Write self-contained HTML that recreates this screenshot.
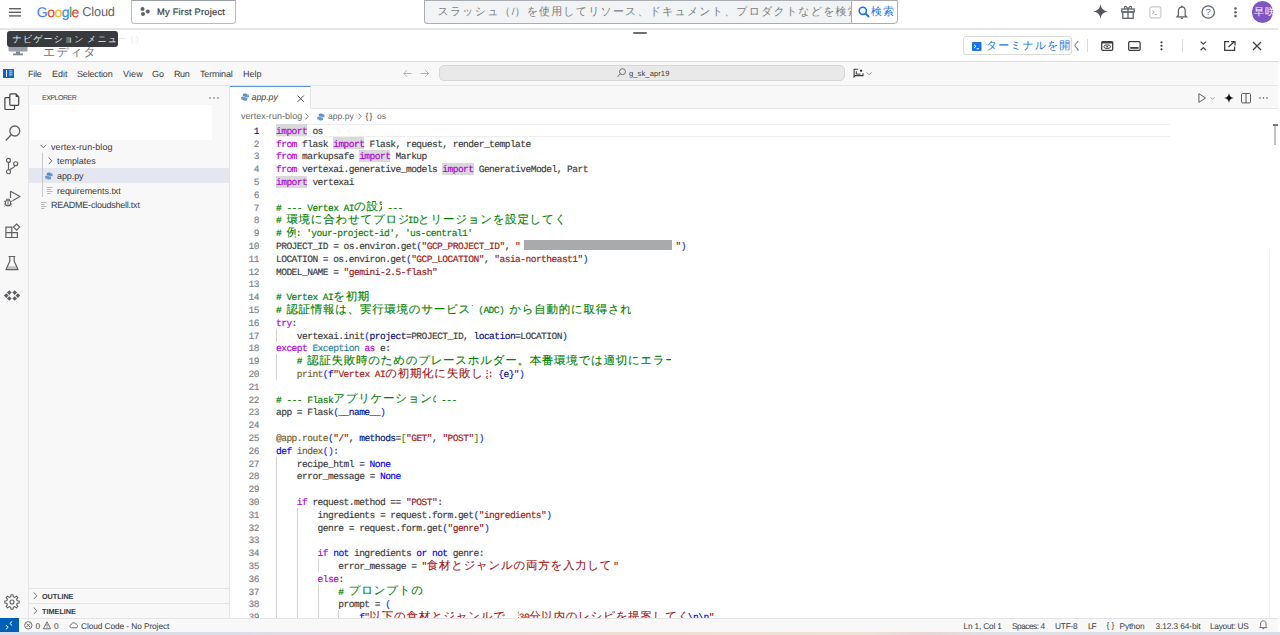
<!DOCTYPE html>
<html><head><meta charset="utf-8">
<style>
*{box-sizing:border-box;margin:0;padding:0}
html,body{width:1280px;height:635px;overflow:hidden;background:#fff;font-family:"Liberation Sans",sans-serif;color:#3b3b3b;text-rendering:geometricPrecision}
.a{position:absolute}
.t{position:absolute;white-space:nowrap;line-height:1}
svg{position:absolute;overflow:visible}
/* top bar */
#sep1{left:0;top:28px;width:1278px;height:2px;background:#e4e6ea}
#projbtn{left:131px;top:0;width:105px;height:24px;border:1px solid #b9bcc1;border-top-color:#9aa0a6;border-radius:0 0 4px 4px;background:#fff}
#search{left:424px;top:0;width:428px;height:24px;background:#f1f3f4;border:1px solid #a9adb2;border-right:none;border-radius:0 0 0 4px}
#searchbtn{left:851px;top:0;width:47px;height:24px;background:#fff;border:1px solid #a9adb2;border-radius:0 0 4px 0}
#avatar{left:1251.5px;top:1.3px;width:21.5px;height:21.5px;border-radius:50%;background:#7e55c4}
/* header */
#hdrline{left:0;top:61px;width:1278px;height:1px;background:#dcdcdc}
#termbtn{left:963px;top:36px;width:109px;height:19px;border:1px solid #dadce0;border-radius:3px;background:#fff}
#tooltip{left:7px;top:31px;width:111px;height:16px;background:#383a3d;border-radius:3px}
/* menubar */
#menubar{left:0;top:62px;width:1278px;height:24px;background:#f8f8f8;border-bottom:1px solid #e5e5e5}
#cmdc{left:439px;top:65px;width:406px;height:16px;background:#e9e9e9;border:1px solid #d6d6d6;border-radius:5px}
/* activity + sidebar */
#act{left:0;top:86px;width:29px;height:532px;background:#f8f8f8;border-right:1px solid #e5e5e5}
#side{left:29px;top:86px;width:201px;height:532px;background:#f8f8f8;border-right:1px solid #e5e5e5}
#filterbox{left:30px;top:105px;width:182px;height:35px;background:#fff}
#selrow{left:29px;top:168px;width:200px;height:15px;background:#e4e6f1}
#outl{left:29px;top:588px;width:200px;height:1px;background:#e5e5e5}
#timel{left:29px;top:603px;width:200px;height:1px;background:#e5e5e5}
.tree{font-size:9px;color:#3b3b3b}
/* editor */
#tabbar{left:230px;top:86px;width:1048px;height:23px;background:#f8f8f8;border-bottom:1px solid #e5e5e5}
#tab{left:230px;top:86px;width:81px;height:23px;background:#fff;border-top:1px solid #5b9bd5;border-right:1px solid #e5e5e5}
#curline{left:276px;top:124px;width:894px;height:13px;border-top:1px solid #eeeeee;border-bottom:1px solid #eeeeee}
#vline{left:1269px;top:249px;width:1px;height:369px;background:#f0f0f0}
#slider{left:1273.5px;top:125px;width:2.5px;height:20px;background:#c2c2c2}
#sliderTop{left:1273px;top:124px;width:4.5px;height:1.5px;background:#7a7a7a}
/* code */
#code{left:276px;top:125.8px;width:1000px;height:493px;overflow:hidden;font-family:"Liberation Mono",monospace;font-size:9.6px;letter-spacing:-0.56px;color:#3b3b3b;-webkit-text-stroke:0.15px}
#code .ln{position:absolute;left:0;white-space:pre;height:12.8px;line-height:12.8px}
#gutter{left:230px;top:125.8px;width:29px;height:493px;overflow:hidden;font-family:"Liberation Mono",monospace;font-size:9.6px;letter-spacing:-0.56px;color:#7a8087;-webkit-text-stroke:0.15px}
#gutter div{position:absolute;right:0;line-height:12.8px;height:12.8px;text-align:right}
#gutter .act{color:#171184}
#guides{left:276px;top:124px;width:200px;height:494px;overflow:hidden}
.ig{position:absolute;width:1px;height:12.8px;background:#d3d3d3}
.j{font-family:"Liberation Sans",sans-serif;font-size:11.5px;letter-spacing:0.71px;-webkit-text-stroke:0.12px;display:inline-block;overflow:hidden;vertical-align:top;height:12.8px;line-height:12.8px;position:relative;top:-1.43px}
.u{font-family:"Liberation Sans",sans-serif}
.k{color:#af00db}.b{color:#0000ff}.c{color:#008000}.s{color:#a31515}.f{color:#795e26}.p{color:#001080}.t2{color:#267f99}

.b1{color:#0431fa}.b2{color:#319331}.b3{color:#7b3814}

.hl{background:#d8d8d8}
#hls{left:276px;top:124px;width:300px;height:80px}
.hlb{position:absolute;width:31.2px;height:12.2px;background:#d9d9d9}
.red{display:inline-block;width:148.6px;height:9.9px;background:#a9aaac;vertical-align:top;position:relative;top:-0.8px;margin-left:-1.8px;margin-right:3.2px}
/* status */
#status{left:0;top:618px;width:1278px;height:14px;background:#f8f8f8;border-top:1px solid #e5e5e5}
#remote{left:0;top:618px;width:19px;height:14px;background:#005fb8}
#strip{left:0;top:632px;width:1280px;height:3px;background:linear-gradient(90deg,#d6dde8 0%,#dcdde8 18%,#e6dae2 26%,#ecdcd6 36%,#efe0d4 55%,#ede3d6 68%,#e9d6d6 72%,#dfe1e6 78%,#d7dee7 100%)}
.st{font-size:8.3px;color:#3b3b3b}
.menu{font-size:9px;color:#3b3b3b}
</style></head><body>

<!-- ===== TOP BAR ===== -->
<div class="a" id="sep1"></div>
<svg style="left:9px;top:8px" width="12" height="9"><rect x="0" y="0" width="12" height="1.4" fill="#5f6368"/><rect x="0" y="3.6" width="12" height="1.4" fill="#5f6368"/><rect x="0" y="7.2" width="12" height="1.4" fill="#5f6368"/></svg>
<div class="t" style="left:36.8px;top:4.9px;font-size:14px;letter-spacing:-0.55px;-webkit-text-stroke:0.15px"><span style="color:#4285f4">G</span><span style="color:#ea4335">o</span><span style="color:#fbbc04">o</span><span style="color:#4285f4">g</span><span style="color:#34a853">l</span><span style="color:#ea4335">e</span></div>
<div class="t" style="left:82.3px;top:6.3px;font-size:12.8px;letter-spacing:-0.2px;color:#5f6368">Cloud</div>
<div class="a" id="projbtn"></div>
<svg style="left:139px;top:6px" width="12" height="12"><circle cx="3.5" cy="2.9" r="2" fill="#5f6368"/><circle cx="8.8" cy="5.6" r="2" fill="#5f6368"/><circle cx="4" cy="8.1" r="2" fill="#5f6368"/></svg>
<div class="t" style="left:157px;top:7.7px;font-size:9.3px;color:#3c4043;-webkit-text-stroke:0.2px;letter-spacing:0.221px">My First Project</div>
<div class="a" id="search"></div>
<div class="t" style="left:437.5px;top:7px;font-size:11px;letter-spacing:1.15px;color:#7a7e83">スラッシュ（<span style="font-size:10px;letter-spacing:0">/</span>）を使用してリソース、ドキュメント、プロダクトなどを検索</div>
<div class="a" id="searchbtn"></div>
<svg style="left:858px;top:6px" width="12" height="12"><circle cx="4.8" cy="4.8" r="3.6" fill="none" stroke="#1a73e8" stroke-width="1.6"/><line x1="7.5" y1="7.5" x2="11" y2="11" stroke="#1a73e8" stroke-width="1.8"/></svg>
<div class="t" style="left:871px;top:7px;font-size:11px;letter-spacing:0.95px;color:#1a73e8">検索</div>
<!-- right icons -->
<svg style="left:1093.2px;top:4.4px" width="15" height="15"><path d="M7.5 0 Q8.1 6.9 15 7.5 Q8.1 8.1 7.5 15 Q6.9 8.1 0 7.5 Q6.9 6.9 7.5 0Z" fill="#55595e"/></svg>
<svg style="left:1121px;top:5px" width="14" height="14"><rect x="0.8" y="4" width="12.4" height="3" fill="none" stroke="#5f6368" stroke-width="1.3"/><rect x="1.8" y="7" width="10.4" height="6.3" fill="none" stroke="#5f6368" stroke-width="1.3"/><line x1="7" y1="4" x2="7" y2="13.3" stroke="#5f6368" stroke-width="1.3"/><path d="M7 4 C5 0 2.5 1 4 4 M7 4 C9 0 11.5 1 10 4" fill="none" stroke="#5f6368" stroke-width="1.2"/></svg>
<svg style="left:1148.5px;top:5.5px" width="13" height="13"><rect x="0.9" y="0.9" width="11" height="11" rx="1.6" fill="none" stroke="#c4c7cb" stroke-width="1.1"/><path d="M3.2 4.6 L5.2 6.2 L3.2 7.8 M5.8 8.6 H8.2" fill="none" stroke="#a8acb0" stroke-width="0.9"/></svg>
<svg style="left:1175.5px;top:5px" width="12" height="15"><path d="M5.8 2 C3.6 2 2.4 3.8 2.4 6 V10.2 L1 11.8 H10.6 L9.2 10.2 V6 C9.2 3.8 8 2 5.8 2Z" fill="none" stroke="#5f6368" stroke-width="1.25"/><circle cx="5.8" cy="1.4" r="0.9" fill="#5f6368"/><rect x="4.6" y="12.6" width="2.4" height="1.4" rx="0.7" fill="#5f6368"/></svg>
<svg style="left:1201px;top:5px" width="15" height="15"><circle cx="7.2" cy="7" r="6.2" fill="none" stroke="#5f6368" stroke-width="1.3"/><text x="7.2" y="10.2" font-size="9" font-family="Liberation Sans" text-anchor="middle" fill="#5f6368">?</text></svg>
<svg style="left:1234px;top:7px" width="3" height="11"><circle cx="1.5" cy="1.5" r="1.3" fill="#5f6368"/><circle cx="1.5" cy="5.3" r="1.3" fill="#5f6368"/><circle cx="1.5" cy="9.1" r="1.3" fill="#5f6368"/></svg>
<div class="a" id="avatar"></div>
<div class="t" style="left:1254px;top:8px;font-size:10px;letter-spacing:1.0px;color:#fff">早咲</div>

<!-- ===== EDITOR HEADER ===== -->
<div class="a" style="left:633px;top:31.7px;width:14px;height:2px;border-radius:1px;background:#717175"></div>
<svg style="left:8px;top:40px" width="20" height="16"><rect x="0.5" y="0.5" width="19" height="11" rx="1" fill="#9aa0a6"/><rect x="8" y="11.5" width="4" height="2.5" fill="#80868b"/><rect x="5" y="13.5" width="10" height="1.8" fill="#80868b"/></svg>
<div class="t" style="left:43px;top:46px;font-size:12px;letter-spacing:1.25px;color:#6a6e73">エディタ</div>
<div class="a" id="tooltip"></div>
<div class="t" style="left:12.6px;top:34.5px;font-size:9px;letter-spacing:1.1px;color:#e8eaed">ナビゲーション<span style="letter-spacing:0"> </span>メニュー<span style="font-size:8.6px;letter-spacing:0"> (.)</span></div>
<div class="a" id="termbtn"></div>
<svg style="left:972px;top:42px" width="10" height="9"><rect x="0" y="0" width="9.5" height="9" rx="1" fill="#1a73e8"/><path d="M2 2.8 L4 4.4 L2 6 M4.6 6.8 H7" fill="none" stroke="#fff" stroke-width="1"/></svg>
<div class="t" style="left:986px;top:41px;font-size:11px;letter-spacing:1.0px;color:#1a73e8">ターミナルを開く</div>
<div class="a" style="left:1087px;top:39px;width:1px;height:13px;background:#dadce0"></div>
<svg style="left:1101px;top:41px" width="13" height="10"><rect x="0.7" y="0.7" width="11" height="8.6" rx="1" fill="none" stroke="#3c4043" stroke-width="1.3"/><rect x="0.7" y="0.7" width="11" height="1.8" fill="#3c4043"/><ellipse cx="6.2" cy="5.7" rx="3.4" ry="1.8" fill="none" stroke="#3c4043" stroke-width="1"/><circle cx="6.2" cy="5.7" r="0.9" fill="#3c4043"/></svg>
<svg style="left:1128px;top:41px" width="13" height="10"><rect x="0.7" y="0.7" width="11.4" height="8.6" rx="1" fill="none" stroke="#3c4043" stroke-width="1.3"/><rect x="2.2" y="6" width="8.4" height="1.8" fill="#3c4043"/></svg>
<svg style="left:1160px;top:41px" width="3" height="10"><circle cx="1.5" cy="1.3" r="1.1" fill="#3c4043"/><circle cx="1.5" cy="4.8" r="1.1" fill="#3c4043"/><circle cx="1.5" cy="8.3" r="1.1" fill="#3c4043"/></svg>
<div class="a" style="left:1182px;top:39px;width:1px;height:13px;background:#dadce0"></div>
<svg style="left:1200px;top:41px" width="7" height="10"><path d="M0.6 0.6 L3.3 3.2 L6 0.6 M0.6 9.2 L3.3 6.6 L6 9.2" fill="none" stroke="#3c4043" stroke-width="1.2"/></svg>
<svg style="left:1224px;top:41px" width="12" height="10"><path d="M5 0.7 H0.7 V9.3 H10.6 V5.5" fill="none" stroke="#3c4043" stroke-width="1.3"/><path d="M4.5 6 L10.8 0.3 M7 0.7 H11 V4.6" fill="none" stroke="#3c4043" stroke-width="1.3"/></svg>
<svg style="left:1252px;top:41px" width="10" height="10"><path d="M1 1 L9 9 M9 1 L1 9" stroke="#3c4043" stroke-width="1.3"/></svg>
<div class="a" id="hdrline"></div>

<!-- ===== MENUBAR ===== -->
<div class="a" id="menubar"></div>
<svg style="left:3px;top:69px" width="11" height="9"><rect x="0" y="0" width="11" height="9" fill="#0a66c9"/><rect x="3" y="1" width="1" height="7" fill="#fff"/><rect x="6" y="1.5" width="3.5" height="0.8" fill="#fff"/><rect x="6" y="3.5" width="3.5" height="0.8" fill="#fff"/><rect x="6" y="5.5" width="3.5" height="0.8" fill="#fff"/></svg>
<div class="t menu" style="left:28px;top:69.5px;letter-spacing:-0.239px">File</div>
<div class="t menu" style="left:52px;top:69.5px;letter-spacing:-0.039px">Edit</div>
<div class="t menu" style="left:77px;top:69.5px;letter-spacing:-0.166px">Selection</div>
<div class="t menu" style="left:123px;top:69.5px;letter-spacing:0.114px">View</div>
<div class="t menu" style="left:152px;top:69.5px;letter-spacing:0.084px">Go</div>
<div class="t menu" style="left:174px;top:69.5px;letter-spacing:-0.408px">Run</div>
<div class="t menu" style="left:200px;top:69.5px;letter-spacing:-0.188px">Terminal</div>
<div class="t menu" style="left:243px;top:69.5px;letter-spacing:-0.039px">Help</div>
<svg style="left:403px;top:69px" width="27" height="9"><path d="M8.5 4.5 H0.8 M4 1.2 L0.8 4.5 L4 7.8" fill="none" stroke="#b3b3b3" stroke-width="1"/><path d="M17.5 4.5 H25.5 M22.2 1.2 L25.5 4.5 L22.2 7.8" fill="none" stroke="#b3b3b3" stroke-width="1"/></svg>
<div class="a" id="cmdc"></div>
<svg style="left:617px;top:68px" width="9" height="10"><circle cx="5.5" cy="3.7" r="3" fill="none" stroke="#616161" stroke-width="0.9"/><line x1="3.4" y1="5.8" x2="0.6" y2="8.8" stroke="#616161" stroke-width="1"/></svg>
<div class="t" style="left:629px;top:69.5px;font-size:7.6px;color:#3b3b3b;letter-spacing:0.079px">g_sk_apr19</div>
<svg style="left:853px;top:68px" width="20" height="10"><path d="M5 1.3 H1.1 V8.9 L2.4 7.6 H10 V5.2" fill="none" stroke="#3b3b3b" stroke-width="1.1"/><path d="M3.3 3.2 V6.1 H7.5" fill="none" stroke="#3b3b3b" stroke-width="1"/><circle cx="8.1" cy="2.8" r="1.15" fill="#222"/><path d="M13.6 4.3 L16.1 6.8 L18.6 4.3" fill="none" stroke="#8a8a8a" stroke-width="0.9"/></svg>

<!-- ===== ACTIVITY BAR ===== -->
<div class="a" id="act"></div>
<svg style="left:4px;top:92px" width="17" height="19"><path d="M6.8 1.9 H11.9 L14.7 4.7 V12.3 Q14.7 13.3 13.7 13.3 H6.8 Q5.8 13.3 5.8 12.3 V2.9 Q5.8 1.9 6.8 1.9Z" fill="none" stroke="#424242" stroke-width="1.2"/><path d="M11.6 1.9 L14.7 5 L11.6 5Z" fill="#424242"/><path d="M5.8 5.7 H1.9 Q0.9 5.7 0.9 6.7 V16.5 Q0.9 17.5 1.9 17.5 H9.5 Q10.5 17.5 10.5 16.5 V13.3" fill="none" stroke="#424242" stroke-width="1.2"/></svg>
<svg style="left:5px;top:125px" width="16" height="17"><circle cx="9.8" cy="6" r="5" fill="none" stroke="#616161" stroke-width="1.3"/><line x1="6.2" y1="9.8" x2="0.8" y2="15.6" stroke="#616161" stroke-width="1.4"/></svg>
<svg style="left:5px;top:157px" width="16" height="18"><circle cx="3.5" cy="3.4" r="2" fill="none" stroke="#616161" stroke-width="1.15"/><circle cx="3.5" cy="14.7" r="2" fill="none" stroke="#616161" stroke-width="1.15"/><circle cx="10.7" cy="6.7" r="2" fill="none" stroke="#616161" stroke-width="1.15"/><path d="M3.5 5.4 V12.7 M10.2 8.6 C9.5 10.6 7 10.8 4.6 13" fill="none" stroke="#616161" stroke-width="1.15"/></svg>
<svg style="left:3px;top:189px" width="18" height="18"><path d="M7.5 2.2 L17 7.6 L9.5 11.8" fill="none" stroke="#616161" stroke-width="1.2" stroke-linejoin="round"/><path d="M7.5 2.2 V9" fill="none" stroke="#616161" stroke-width="1.2"/><ellipse cx="5" cy="14" rx="2.6" ry="3" fill="#f8f8f8" stroke="#616161" stroke-width="1.1"/><path d="M3 10.5 Q5 9.5 7 10.5 M0.8 12.3 H2.4 M7.6 12.3 H9.2 M0.8 15 H2.4 M7.6 15 H9.2 M1.4 17.4 L2.6 16.4 M8.6 17.4 L7.4 16.4 M5 11.5 V17" fill="none" stroke="#616161" stroke-width="0.9"/></svg>
<svg style="left:5px;top:223px" width="16" height="16"><path d="M0.9 4.2 H6.8 V9.6 H0.9Z M0.9 9.6 H6.8 V14.5 H0.9Z M6.8 9.6 H12.4 V14.5 H6.8Z" fill="none" stroke="#616161" stroke-width="1.2"/><path d="M11.6 1 L14.7 4.1 L11.6 7.2 L8.5 4.1Z" fill="none" stroke="#616161" stroke-width="1.2"/></svg>
<svg style="left:5px;top:255px" width="14" height="16"><path d="M3.6 1.5 H10.2 M4.8 1.5 V6.2 L1 14.6 H13 L9.2 6.2 V1.5" fill="none" stroke="#616161" stroke-width="1.2" stroke-linejoin="round"/><path d="M2.6 11.2 L11.4 11.2 L12.6 14 H1.4Z" fill="#616161" opacity="0.35"/></svg>
<svg style="left:0px;top:285px" width="26" height="20"><path d="M6.30 8.25 L8.65 10.60 L6.30 12.95 L3.95 10.60Z M9.30 5.25 L11.65 7.60 L9.30 9.95 L6.95 7.60Z M9.30 11.15 L11.65 13.50 L9.30 15.85 L6.95 13.50Z M14.70 5.25 L17.05 7.60 L14.70 9.95 L12.35 7.60Z M17.90 8.25 L20.25 10.60 L17.90 12.95 L15.55 10.60Z M14.70 11.15 L17.05 13.50 L14.70 15.85 L12.35 13.50Z" fill="#5f6166"/></svg>
<svg style="left:4px;top:594px" width="17" height="17"><path d="M15.23 6.97 L15.23 9.03 L13.25 9.26 L12.60 10.82 L13.84 12.38 L12.38 13.84 L10.82 12.60 L9.26 13.25 L9.03 15.23 L6.97 15.23 L6.74 13.25 L5.18 12.60 L3.62 13.84 L2.16 12.38 L3.40 10.82 L2.75 9.26 L0.77 9.03 L0.77 6.97 L2.75 6.74 L3.40 5.18 L2.16 3.62 L3.62 2.16 L5.18 3.40 L6.74 2.75 L6.97 0.77 L9.03 0.77 L9.26 2.75 L10.82 3.40 L12.38 2.16 L13.84 3.62 L12.60 5.18 L13.25 6.74Z" fill="none" stroke="#616161" stroke-width="1.1" stroke-linejoin="round"/><circle cx="8" cy="8" r="2" fill="none" stroke="#616161" stroke-width="1.1"/></svg>

<!-- ===== SIDEBAR ===== -->
<div class="a" id="side"></div>
<div class="t" style="left:42px;top:94.5px;font-size:7px;color:#4a4a4a;letter-spacing:-0.489px">EXPLORER</div>
<svg style="left:209px;top:97px" width="10" height="2"><circle cx="1" cy="1" r="0.8" fill="#616161"/><circle cx="5" cy="1" r="0.8" fill="#616161"/><circle cx="9" cy="1" r="0.8" fill="#616161"/></svg>
<div class="a" id="filterbox"></div>
<div class="a" id="selrow"></div>
<svg style="left:40px;top:144px" width="7" height="5"><path d="M0.5 0.8 L3.3 3.8 L6.1 0.8" fill="none" stroke="#616161" stroke-width="0.9"/></svg>
<div class="t tree" style="left:51px;top:142.5px;letter-spacing:0.069px">vertex-run-blog</div>
<div class="a" style="left:42px;top:153px;width:1px;height:44px;background:#c8c8c8"></div>
<svg style="left:48px;top:157px" width="5" height="8"><path d="M0.8 0.5 L3.8 3.8 L0.8 7.1" fill="none" stroke="#616161" stroke-width="0.9"/></svg>
<div class="t tree" style="left:57px;top:157px;letter-spacing:-0.041px">templates</div>
<svg style="left:44.5px;top:171.5px" width="9" height="9"><g transform="scale(0.88)" opacity="0.85"><path d="M4.3 0.5 C2 0.5 2 1.5 2 2.5 V3.6 H4.6 V4.2 H1.2 C0 4.2 0 5.8 0.5 6.8 C0.8 7.6 1.5 7.6 2 7.6 V6 C2 5 3 4.6 3.6 4.6 H5.6 C6.4 4.6 6.8 4 6.8 3.4 V1.6 C6.8 0.8 5.6 0.5 4.3 0.5Z" fill="#3f7fbf"/><path d="M4.6 8.5 C6.9 8.5 6.9 7.5 6.9 6.5 V5.4 H4.3 V4.8 H7.7 C8.9 4.8 8.9 3.2 8.4 2.2 C8.1 1.4 7.4 1.4 6.9 1.4 V3 C6.9 4 5.9 4.4 5.3 4.4 H3.3 C2.5 4.4 2.1 5 2.1 5.6 V7.4 C2.1 8.2 3.3 8.5 4.6 8.5Z" fill="#4b8bc6"/></g></svg>
<div class="t tree" style="left:57px;top:171.5px;letter-spacing:-0.086px">app.py</div>
<svg style="left:47px;top:187px" width="6" height="7"><path d="M0 0.5 H5.5 M0 2.5 H4 M0 4.5 H5.5 M0 6.5 H3.5" stroke="#b5b5b5" stroke-width="0.95"/></svg>
<div class="t tree" style="left:57px;top:186.5px;letter-spacing:-0.049px">requirements.txt</div>
<svg style="left:41px;top:202px" width="6" height="7"><path d="M0 0.5 H5.5 M0 2.5 H4 M0 4.5 H5.5 M0 6.5 H3.5" stroke="#b5b5b5" stroke-width="0.95"/></svg>
<div class="t tree" style="left:51px;top:201px;letter-spacing:-0.232px">README-cloudshell.txt</div>
<div class="a" id="outl"></div>
<div class="a" id="timel"></div>
<svg style="left:33px;top:592px" width="5" height="8"><path d="M0.8 0.5 L3.8 3.8 L0.8 7.1" fill="none" stroke="#616161" stroke-width="0.9"/></svg>
<div class="t" style="left:42px;top:593px;font-size:7.3px;font-weight:bold;color:#3b3b3b;letter-spacing:-0.089px">OUTLINE</div>
<svg style="left:33px;top:607px" width="5" height="8"><path d="M0.8 0.5 L3.8 3.8 L0.8 7.1" fill="none" stroke="#616161" stroke-width="0.9"/></svg>
<div class="t" style="left:42px;top:608px;font-size:7.3px;font-weight:bold;color:#3b3b3b;letter-spacing:-0.009px">TIMELINE</div>

<!-- ===== EDITOR ===== -->
<div class="a" id="tabbar"></div>
<div class="a" id="tab"></div>
<svg style="left:240.5px;top:93px" width="10" height="10"><g transform="scale(0.82)" opacity="0.85"><path d="M4.8 0.5 C2.2 0.5 2.2 1.6 2.2 2.8 V4 H5.1 V4.6 H1.3 C0 4.6 0 6.4 0.5 7.5 C0.9 8.4 1.6 8.4 2.2 8.4 V6.6 C2.2 5.5 3.3 5.1 4 5.1 H6.2 C7.1 5.1 7.5 4.4 7.5 3.8 V1.8 C7.5 0.9 6.2 0.5 4.8 0.5Z" fill="#3f7fbf"/><path d="M5.1 9.5 C7.7 9.5 7.7 8.4 7.7 7.2 V6 H4.8 V5.4 H8.6 C9.9 5.4 9.9 3.6 9.4 2.5 C9 1.6 8.3 1.6 7.7 1.6 V3.4 C7.7 4.5 6.6 4.9 5.9 4.9 H3.7 C2.8 4.9 2.4 5.6 2.4 6.2 V8.2 C2.4 9.1 3.7 9.5 5.1 9.5Z" fill="#4b8bc6"/></g></svg>
<div class="t" style="left:251.5px;top:93px;font-size:8.8px;font-style:italic;color:#3b3b3b">app.py</div>
<svg style="left:297px;top:94.5px" width="8" height="8"><path d="M0.6 0.6 L6.8 6.8 M6.8 0.6 L0.6 6.8" stroke="#424242" stroke-width="0.95"/></svg>
<!-- editor actions -->
<svg style="left:1197.5px;top:92.5px" width="20" height="11"><path d="M0.9 0.7 L7.6 5 L0.9 9.3Z" fill="none" stroke="#555" stroke-width="0.95" stroke-linejoin="round"/><path d="M12.5 4.3 L14.5 6.3 L16.5 4.3" fill="none" stroke="#8a8a8a" stroke-width="0.8"/></svg>
<svg style="left:1223.5px;top:93px" width="10" height="10"><path d="M5 0 C5.5 3.2 6.6 4.4 10 5 C6.6 5.6 5.5 6.8 5 10 C4.5 6.8 3.4 5.6 0 5 C3.4 4.4 4.5 3.2 5 0Z" fill="#111"/></svg>
<svg style="left:1241px;top:92.5px" width="10" height="11"><rect x="0.5" y="0.5" width="9" height="9.4" rx="1" fill="none" stroke="#555" stroke-width="0.95"/><line x1="5" y1="0.5" x2="5" y2="9.9" stroke="#555" stroke-width="0.95"/></svg>
<svg style="left:1259px;top:97px" width="9" height="2"><circle cx="1" cy="1" r="0.75" fill="#424242"/><circle cx="4.5" cy="1" r="0.75" fill="#424242"/><circle cx="8" cy="1" r="0.75" fill="#424242"/></svg>
<!-- breadcrumbs -->
<div class="t" style="left:241px;top:112px;font-size:9px;letter-spacing:0.05px;color:#6a6a6a">vertex-run-blog</div>
<svg style="left:305px;top:113px" width="4" height="7"><path d="M0.5 0.5 L3.2 3.4 L0.5 6.3" fill="none" stroke="#616161" stroke-width="0.8"/></svg>
<svg style="left:316.5px;top:112.5px" width="9" height="9"><g transform="scale(0.88)" opacity="0.85"><path d="M4.3 0.5 C2 0.5 2 1.5 2 2.5 V3.6 H4.6 V4.2 H1.2 C0 4.2 0 5.8 0.5 6.8 C0.8 7.6 1.5 7.6 2 7.6 V6 C2 5 3 4.6 3.6 4.6 H5.6 C6.4 4.6 6.8 4 6.8 3.4 V1.6 C6.8 0.8 5.6 0.5 4.3 0.5Z" fill="#3f7fbf"/><path d="M4.6 8.5 C6.9 8.5 6.9 7.5 6.9 6.5 V5.4 H4.3 V4.8 H7.7 C8.9 4.8 8.9 3.2 8.4 2.2 C8.1 1.4 7.4 1.4 6.9 1.4 V3 C6.9 4 5.9 4.4 5.3 4.4 H3.3 C2.5 4.4 2.1 5 2.1 5.6 V7.4 C2.1 8.2 3.3 8.5 4.6 8.5Z" fill="#4b8bc6"/></g></svg>
<div class="t" style="left:328px;top:112px;font-size:8.6px;color:#6a6a6a">app.py</div>
<svg style="left:358px;top:113px" width="4" height="7"><path d="M0.5 0.5 L3.2 3.4 L0.5 6.3" fill="none" stroke="#616161" stroke-width="0.8"/></svg>
<div class="t" style="left:365.5px;top:111.5px;font-size:8.6px;letter-spacing:1.2px;color:#424242">{}</div>
<div class="t" style="left:377px;top:112px;font-size:8.6px;color:#6a6a6a">os</div>

<div class="a" id="curline"></div>
<div class="a" id="guides"><div class="ig" style="left:0.0px;top:204.80px"></div>
<div class="ig" style="left:0.0px;top:230.40px"></div>
<div class="ig" style="left:0.0px;top:243.20px"></div>
<div class="ig" style="left:0.0px;top:332.80px"></div>
<div class="ig" style="left:0.0px;top:345.60px"></div>
<div class="ig" style="left:0.0px;top:358.40px"></div>
<div class="ig" style="left:0.0px;top:371.20px"></div>
<div class="ig" style="left:0.0px;top:384.00px"></div>
<div class="ig" style="left:20.8px;top:384.00px"></div>
<div class="ig" style="left:0.0px;top:396.80px"></div>
<div class="ig" style="left:20.8px;top:396.80px"></div>
<div class="ig" style="left:0.0px;top:409.60px"></div>
<div class="ig" style="left:20.8px;top:409.60px"></div>
<div class="ig" style="left:0.0px;top:422.40px"></div>
<div class="ig" style="left:20.8px;top:422.40px"></div>
<div class="ig" style="left:0.0px;top:435.20px"></div>
<div class="ig" style="left:20.8px;top:435.20px"></div>
<div class="ig" style="left:41.6px;top:435.20px"></div>
<div class="ig" style="left:0.0px;top:448.00px"></div>
<div class="ig" style="left:20.8px;top:448.00px"></div>
<div class="ig" style="left:0.0px;top:460.80px"></div>
<div class="ig" style="left:20.8px;top:460.80px"></div>
<div class="ig" style="left:41.6px;top:460.80px"></div>
<div class="ig" style="left:0.0px;top:473.60px"></div>
<div class="ig" style="left:20.8px;top:473.60px"></div>
<div class="ig" style="left:41.6px;top:473.60px"></div>
<div class="ig" style="left:0.0px;top:486.40px"></div>
<div class="ig" style="left:20.8px;top:486.40px"></div>
<div class="ig" style="left:41.6px;top:486.40px"></div>
<div class="ig" style="left:62.4px;top:486.40px"></div></div>
<div class="a" id="hls"><div class="hlb" style="left:0.0px;top:0.30px"></div>
<div class="hlb" style="left:57.2px;top:13.10px"></div>
<div class="hlb" style="left:83.2px;top:25.90px"></div>
<div class="hlb" style="left:166.4px;top:38.70px"></div>
<div class="hlb" style="left:0.0px;top:51.50px"></div></div>
<div class="a" id="gutter"><div class="gn act" style="top:0.00px">1</div>
<div class="gn" style="top:12.80px">2</div>
<div class="gn" style="top:25.60px">3</div>
<div class="gn" style="top:38.40px">4</div>
<div class="gn" style="top:51.20px">5</div>
<div class="gn" style="top:64.00px">6</div>
<div class="gn" style="top:76.80px">7</div>
<div class="gn" style="top:89.60px">8</div>
<div class="gn" style="top:102.40px">9</div>
<div class="gn" style="top:115.20px">10</div>
<div class="gn" style="top:128.00px">11</div>
<div class="gn" style="top:140.80px">12</div>
<div class="gn" style="top:153.60px">13</div>
<div class="gn" style="top:166.40px">14</div>
<div class="gn" style="top:179.20px">15</div>
<div class="gn" style="top:192.00px">16</div>
<div class="gn" style="top:204.80px">17</div>
<div class="gn" style="top:217.60px">18</div>
<div class="gn" style="top:230.40px">19</div>
<div class="gn" style="top:243.20px">20</div>
<div class="gn" style="top:256.00px">21</div>
<div class="gn" style="top:268.80px">22</div>
<div class="gn" style="top:281.60px">23</div>
<div class="gn" style="top:294.40px">24</div>
<div class="gn" style="top:307.20px">25</div>
<div class="gn" style="top:320.00px">26</div>
<div class="gn" style="top:332.80px">27</div>
<div class="gn" style="top:345.60px">28</div>
<div class="gn" style="top:358.40px">29</div>
<div class="gn" style="top:371.20px">30</div>
<div class="gn" style="top:384.00px">31</div>
<div class="gn" style="top:396.80px">32</div>
<div class="gn" style="top:409.60px">33</div>
<div class="gn" style="top:422.40px">34</div>
<div class="gn" style="top:435.20px">35</div>
<div class="gn" style="top:448.00px">36</div>
<div class="gn" style="top:460.80px">37</div>
<div class="gn" style="top:473.60px">38</div>
<div class="gn" style="top:486.40px">39</div></div>
<div class="a" id="code"><div class="ln" style="top:0.00px"><span class="k">import</span> os</div>
<div class="ln" style="top:12.80px"><span class="k">from</span> flask <span class="k">import</span> Flask, request, render_template</div>
<div class="ln" style="top:25.60px"><span class="k">from</span> markupsafe <span class="k">import</span> Markup</div>
<div class="ln" style="top:38.40px"><span class="k">from</span> vertexai.generative_models <span class="k">import</span> GenerativeModel, Part</div>
<div class="ln" style="top:51.20px"><span class="k">import</span> vertexai</div>
<div class="ln" style="top:64.00px"></div>
<div class="ln" style="top:76.80px"><span class="c"># --- Vertex AI<span class="j" style="width:27.99px">の設定</span> ---</span></div>
<div class="ln" style="top:89.60px"><span class="c"># <span class="j" style="width:121.29px">環境に合わせてプロジェクト</span>ID<span class="j" style="width:149.28px">とリージョンを設定してください。</span></span></div>
<div class="ln" style="top:102.40px"><span class="c"># <span class="j" style="width:9.33px">例</span>: &#x27;your-project-id&#x27;, &#x27;us-central1&#x27;</span></div>
<div class="ln" style="top:115.20px">PROJECT_ID = os.environ.get<span class="b1">(</span><span class="s">&quot;GCP_PROJECT_ID&quot;</span>, <span class="s">&quot; </span><span class="red"></span><span class="s">&quot;</span><span class="b1">)</span></div>
<div class="ln" style="top:128.00px">LOCATION = os.environ.get<span class="b1">(</span><span class="s">&quot;GCP_LOCATION&quot;</span>, <span class="s">&quot;asia-northeast1&quot;</span><span class="b1">)</span></div>
<div class="ln" style="top:140.80px">MODEL_NAME = <span class="s">&quot;gemini-2.5-flash&quot;</span></div>
<div class="ln" style="top:153.60px"></div>
<div class="ln" style="top:166.40px"><span class="c"># Vertex AI<span class="j" style="width:37.32px">を初期化</span></span></div>
<div class="ln" style="top:179.20px"><span class="c"># <span class="j" style="width:186.60px">認証情報は、実行環境のサービスアカウント</span> (ADC) <span class="j" style="width:121.29px">から自動的に取得されます。</span></span></div>
<div class="ln" style="top:192.00px"><span class="k">try</span>:</div>
<div class="ln" style="top:204.80px">    vertexai.init<span class="b1">(</span><span class="p">project</span>=PROJECT_ID, <span class="p">location</span>=LOCATION<span class="b1">)</span></div>
<div class="ln" style="top:217.60px"><span class="k">except</span> <span class="t2">Exception</span> <span class="k">as</span> e:</div>
<div class="ln" style="top:230.40px"><span class="c">    # <span class="j" style="width:363.87px">認証失敗時のためのプレースホルダー。本番環境では適切にエラー処理してください。</span></span></div>
<div class="ln" style="top:243.20px">    <span class="f">print</span><span class="b1">(</span><span class="b">f</span><span class="s">&quot;Vertex AI<span class="j" style="width:102.63px">の初期化に失敗しました</span>: </span><span class="b">{</span><span class="p">e</span><span class="b">}</span><span class="s">&quot;</span><span class="b1">)</span></div>
<div class="ln" style="top:256.00px"></div>
<div class="ln" style="top:268.80px"><span class="c"># --- Flask<span class="j" style="width:102.63px">アプリケーションの設定</span> ---</span></div>
<div class="ln" style="top:281.60px">app = Flask<span class="b1">(</span><span class="p">__name__</span><span class="b1">)</span></div>
<div class="ln" style="top:294.40px"></div>
<div class="ln" style="top:307.20px"><span class="f">@app.route</span><span class="b1">(</span><span class="s">&quot;/&quot;</span>, <span class="p">methods</span>=<span class="b2">[</span><span class="s">&quot;GET&quot;</span>, <span class="s">&quot;POST&quot;</span><span class="b2">]</span><span class="b1">)</span></div>
<div class="ln" style="top:320.00px"><span class="b">def</span> <span class="f">index</span><span class="b1">()</span>:</div>
<div class="ln" style="top:332.80px">    recipe_html = <span class="b">None</span></div>
<div class="ln" style="top:345.60px">    error_message = <span class="b">None</span></div>
<div class="ln" style="top:358.40px"></div>
<div class="ln" style="top:371.20px">    <span class="k">if</span> request.method == <span class="s">&quot;POST&quot;</span>:</div>
<div class="ln" style="top:384.00px">        ingredients = request.form.get<span class="b1">(</span><span class="s">&quot;ingredients&quot;</span><span class="b1">)</span></div>
<div class="ln" style="top:396.80px">        genre = request.form.get<span class="b1">(</span><span class="s">&quot;genre&quot;</span><span class="b1">)</span></div>
<div class="ln" style="top:409.60px"></div>
<div class="ln" style="top:422.40px">        <span class="k">if</span> <span class="b">not</span> ingredients <span class="b">or</span> <span class="b">not</span> genre:</div>
<div class="ln" style="top:435.20px">            error_message = <span class="s">&quot;<span class="j" style="width:186.60px">食材とジャンルの両方を入力してください。</span>&quot;</span></div>
<div class="ln" style="top:448.00px">        <span class="k">else</span>:</div>
<div class="ln" style="top:460.80px"><span class="c">            # <span class="j" style="width:74.64px">プロンプトの作成</span></span></div>
<div class="ln" style="top:473.60px">            prompt = <span class="b1">(</span></div>
<div class="ln" style="top:486.40px">                <span class="b">f</span><span class="s">&quot;<span class="j" style="width:149.28px">以下の食材とジャンルで、調理時間</span>30<span class="j" style="width:158.61px">分以内のレシピを提案してください。</span></span><span class="b">\n\n</span><span class="s">&quot;</span></div></div>
<div class="a" id="vline"></div>
<div class="a" id="slider"></div>
<div class="a" id="sliderTop"></div>

<!-- ===== STATUS ===== -->
<div class="a" id="status"></div>
<div class="a" id="remote"></div>
<svg style="left:4.5px;top:621px" width="8" height="9"><path d="M0.8 4.2 L3.2 6.2 L0.8 8.4 M7.2 0.4 L4.8 2.4 L7.2 4.6" fill="none" stroke="#fff" stroke-width="1"/></svg>
<svg style="left:24px;top:621px" width="9" height="9"><circle cx="4.3" cy="4.3" r="3.7" fill="none" stroke="#616161" stroke-width="0.9"/><path d="M2.6 2.6 L6 6 M6 2.6 L2.6 6" stroke="#616161" stroke-width="0.9"/></svg>
<div class="t st" style="left:35.5px;top:621.7px">0</div>
<svg style="left:43px;top:620.5px" width="9" height="9"><path d="M4 0.8 L7.6 7.8 H0.4Z M4 3 V5.5 M4 6.3 V7" fill="none" stroke="#616161" stroke-width="0.9"/></svg>
<div class="t st" style="left:54px;top:621.7px">0</div>
<svg style="left:69px;top:621px" width="10" height="8"><path d="M2.5 6.8 C0.5 6.8 0.3 4 2.2 3.8 C2.4 1.6 5.6 1 6.6 3 C8.6 2.8 9.4 6.8 7.3 6.8Z" fill="none" stroke="#616161" stroke-width="0.9"/></svg>
<div class="t st" style="left:81px;top:621.7px;letter-spacing:-0.074px">Cloud Code - No Project</div>

<div class="t st" style="left:963.5px;top:621.7px;letter-spacing:-0.184px">Ln 1, Col 1</div>
<div class="t st" style="left:1012px;top:621.7px;letter-spacing:-0.488px">Spaces: 4</div>
<div class="t st" style="left:1055px;top:621.7px;letter-spacing:-0.204px">UTF-8</div>
<div class="t st" style="left:1088px;top:621.7px;letter-spacing:-1.000px">LF</div>
<div class="t st" style="left:1106.5px;top:621.2px">{ }</div>
<div class="t st" style="left:1119.5px;top:621.7px;letter-spacing:-0.149px">Python</div>
<div class="t st" style="left:1155.5px;top:621.7px;letter-spacing:-0.095px">3.12.3 64-bit</div>
<div class="t st" style="left:1210px;top:621.7px;letter-spacing:-0.251px">Layout: US</div>
<svg style="left:1259px;top:620px" width="9" height="10"><path d="M4.3 0.8 C2.4 0.8 1.6 2.3 1.6 4 V6.5 L0.7 7.6 H7.9 L7 6.5 V4 C7 2.3 6.2 0.8 4.3 0.8Z M3.3 8.6 H5.3" fill="none" stroke="#616161" stroke-width="0.9"/></svg>
<div class="a" id="strip"></div>
</body></html>
